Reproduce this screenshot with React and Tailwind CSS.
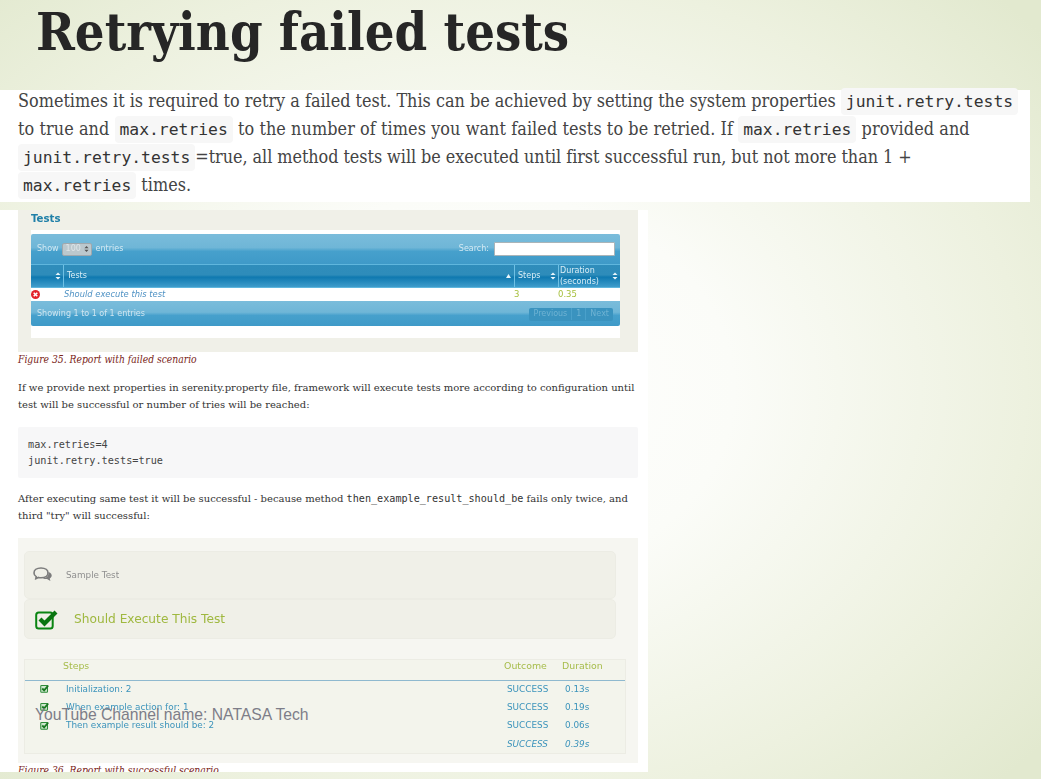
import React from "react";

const serif = "font-['DejaVu_Serif_Condensed','DejaVu_Serif',serif]";
const serifWide = "font-['DejaVu_Serif',serif]";
const sans = "font-['DejaVu_Sans','Liberation_Sans',sans-serif]";
const mono = "font-['DejaVu_Sans_Mono',monospace]";

function Code({ children }) {
  return (
    <code className={`${mono} text-[16.35px] tracking-normal leading-none bg-[#f7f7f7] rounded-[4px] px-[5px] py-[4px] text-[#333]`}>
      {children}
    </code>
  );
}

function SortIcon() {
  return (
    <svg width="6" height="8" viewBox="0 0 6 8" className="shrink-0">
      <path d="M3 0.5 L5.5 3 H0.5Z M3 7.5 L5.5 5 H0.5Z" fill="#eaf6fb" />
    </svg>
  );
}

function SortIconDark() {
  return (
    <svg width="5" height="8" viewBox="0 0 6 8" className="shrink-0">
      <path d="M3 0.5 L5.5 3 H0.5Z M3 7.5 L5.5 5 H0.5Z" fill="#555" />
    </svg>
  );
}

function Check() {
  return (
    <svg width="9" height="9" viewBox="0 0 12 12" className="shrink-0 -mt-[2px]">
      <rect x="1" y="2" width="9" height="9" rx="1" fill="#cfe8cf" stroke="#2e8b3a" strokeWidth="1.4" />
      <path d="M3 6 L5.5 8.5 L11 2" fill="none" stroke="#17761f" strokeWidth="2.4" />
    </svg>
  );
}

function StepRow({ name, time, h, italic }) {
  return (
    <div className={`flex items-center text-[#3b93bb] text-[8.85px] ${h} ${sans} ${italic ? "italic" : ""}`}>
      <div className="w-[13px] ml-[15px] flex">{name && <Check />}</div>
      <div className="ml-[13px] flex-1">{name}</div>
      <div className="w-[58px]">SUCCESS</div>
      <div className="w-[60px]">{time}</div>
    </div>
  );
}

const barGrad = "bg-[linear-gradient(180deg,#7abcdb_0%,#6fb6d7_45%,#46a0cc_58%,#3f9ac8_100%)]";

export default function App() {
  return (
    <div className="relative h-[779px] w-[1041px] overflow-hidden bg-[radial-gradient(ellipse_70%_72%_at_46%_50%,#ffffff_0%,#fbfcf8_35%,#edf1df_75%,#e2e9cf_100%)]">
      <div className="h-[90px] pl-[36px] pt-[1px]">
        <h1 className={`${serif} font-bold text-[52px] leading-[62px] text-[#262626]`}>Retrying failed tests</h1>
      </div>

      <div className={`${serif} w-[1030px] h-[112px] bg-white pl-[18px] text-[17.85px] text-[#444]`}>
        <p className="whitespace-nowrap h-[28px] leading-[22px]">Sometimes it is required to retry a failed test. This can be achieved by setting the system properties <Code>junit.retry.tests</Code></p>
        <p className="whitespace-nowrap h-[28px] leading-[22px] tracking-[0.08px]">to true and <Code>max.retries</Code> to the number of times you want failed tests to be retried. If <Code>max.retries</Code> provided and</p>
        <p className="whitespace-nowrap h-[28px] leading-[22px] tracking-[-0.05px]"><Code>junit.retry.tests</Code>=true, all method tests will be executed until first successful run, but not more than 1 +</p>
        <p className="whitespace-nowrap h-[28px] leading-[22px]"><Code>max.retries</Code> times.</p>
      </div>

      <div className="mt-[8px] w-[648px] h-[562px] bg-white pl-[18px] pr-[10px]">
        {/* Figure 35 */}
        <div className="h-[142px] bg-[#f0f0e8] pl-[13px] pr-[18px]">
          <div className="blur-[0.3px]">
            <div className={`${sans} h-[20px] pt-[2px] text-[10.2px] leading-[13px] font-bold text-[#1f7fa8]`}>Tests</div>
            <div className="h-[108px] bg-white pt-[4px]">
              <div className={`${barGrad} rounded-t-[2px] h-[30px] flex items-center pl-[6px] pr-[5px] text-[8px] ${sans} text-[#d3e9f3]`}>
                <span>Show</span>
                <span className="ml-[3px] w-[30px] h-[13px] rounded-[2px] bg-[#bcc8cd] border border-[#a0a8ad] text-[#dfe5e8] flex items-center pl-[3px] justify-between pr-[2px]">
                  100
                  <SortIconDark />
                </span>
                <span className="ml-[4px]">entries</span>
                <span className="ml-auto mr-[5px]">Search:</span>
                <span className="w-[121px] h-[14px] bg-white border border-[#aab4b8] rounded-[1px]" />
              </div>
              <div className={`h-[24px] flex text-[8px] leading-[11.5px] ${sans} text-[#d8edf6] bg-[linear-gradient(180deg,#2f8dbb_0%,#2e8cba_45%,#0f79b0_55%,#3f9ccb_100%)] border-y border-[#5fb6dd]`}>
                <div className="w-[33px] border-r border-[#6fc0e4] flex items-center justify-end pr-[2px]"><SortIcon /></div>
                <div className="flex-1 flex items-center pl-[3px]">
                  <span>Tests</span>
                  <svg width="5" height="4" viewBox="0 0 5 4" className="ml-auto mr-[3px]"><path d="M2.5 0 L5 4 H0Z" fill="#eaf6fb" /></svg>
                </div>
                <div className="w-[45px] border-x border-[#6fc0e4] flex items-center pl-[3px] pr-[2px] justify-between"><span>Steps</span><SortIcon /></div>
                <div className="w-[62px] -ml-[1px] flex items-center pl-[2px] pr-[2px] justify-between"><span>Duration<br />(seconds)</span><SortIcon /></div>
              </div>
              <div className={`h-[13px] flex items-center text-[8.5px] ${sans} bg-white`}>
                <div className="w-[33px] flex">
                  <svg width="9" height="9" viewBox="0 0 10 10"><circle cx="5" cy="5" r="5" fill="#e2232a" /><path d="M3 3 L7 7 M7 3 L3 7" stroke="#fff" strokeWidth="1.7" /></svg>
                </div>
                <div className="flex-1 italic text-[#4f92c4] text-[8.35px]">Should execute this test</div>
                <div className="w-[44px] text-[#a6bf3c]">3</div>
                <div className="w-[62px] text-[#a6bf3c]">0.35</div>
              </div>
              <div className={`${barGrad} rounded-b-[2px] h-[25px] flex items-center pl-[6px] pr-[7px] pt-[1px] text-[8px] ${sans} text-[#cfe6f1]`}>
                <span>Showing 1 to 1 of 1 entries</span>
                <span className="ml-auto flex bg-[#3a93bf] rounded-[2px] text-[#6fb3d3] h-[13px] items-center">
                  <span className="px-[4px] border-r border-[#4aa0ca]">Previous</span>
                  <span className="px-[4px] border-r border-[#4aa0ca]">1</span>
                  <span className="px-[4px]">Next</span>
                </span>
              </div>
            </div>
          </div>
        </div>

        <p className={`${serif} italic text-[10.25px] leading-[14px] text-[#7a2518]`}>Figure 35. Report with failed scenario</p>

        <div className={`${serifWide} text-[10px] leading-[17px] text-[#333] mt-[13px]`}>
          <p className="whitespace-nowrap h-[17px]">If we provide next properties in serenity.property file, framework will execute tests more according to configuration until</p>
          <p className="whitespace-nowrap h-[17px]">test will be successful or number of tries will be reached:</p>
        </div>

        <pre className={`${mono} mt-[14px] h-[51px] bg-[#f7f7f8] rounded-[2px] pl-[10px] pt-[10px] text-[10.2px] leading-[16px] text-[#444]`}>{"max.retries=4\njunit.retry.tests=true"}</pre>

        <div className={`${serifWide} text-[10px] leading-[17px] text-[#333] mt-[12px]`}>
          <p className="whitespace-nowrap h-[17px]">After executing same test it will be successful - because method <code className={`${mono} text-[10.15px] leading-none text-[#333]`}>then_example_result_should_be</code> fails only twice, and</p>
          <p className="whitespace-nowrap h-[17px]">third "try" will successful:</p>
        </div>

        {/* Figure 36 */}
        <div className="mt-[14px] h-[225px] bg-[#f6f6f1] pt-[13px] pl-[6px] pr-[12px]">
          <div className="blur-[0.3px]">
            <div className={`h-[48px] mr-[10px] pt-[1px] rounded-[5px] border border-[#ecece4] bg-[#f0f0e8] flex items-center ${sans}`}>
              <svg width="20" height="15" viewBox="0 0 20 15" className="ml-[8px] -mt-[3px]">
                <path d="M8 1 C3.5 1 1 3.3 1 6 C1 7.5 1.8 8.8 3.2 9.6 L2.8 11.6 L5.5 10.4 C6.3 10.7 7.2 10.8 8 10.8 C12.5 10.8 15 8.6 15 6 C15 3.3 12.5 1 8 1Z" fill="none" stroke="#7c7c7c" strokeWidth="1.6" />
                <path d="M15.5 5 C18 6 19 7.5 18.7 9 C18.4 10.2 17.5 11 16.8 11.4 L17.4 14 L14 12 C12.5 12.2 11 12 9.8 11.4 C12.5 11.4 16 9.5 15.5 5Z" fill="#7c7c7c" />
              </svg>
              <span className="ml-[13px] text-[8.8px] text-[#8f8f8f]">Sample Test</span>
            </div>
            <div className={`h-[40px] mr-[10px] rounded-[5px] border border-[#ecece4] bg-[#f0f0e8] flex items-center ${sans}`}>
              <svg width="24" height="21" viewBox="0 0 24 21" className="ml-[10px]">
                <rect x="1.2" y="3.5" width="16.5" height="16" rx="2.5" fill="none" stroke="#0a8512" strokeWidth="2" />
                <path d="M5 10 L9.5 14.5 L21 3" fill="none" stroke="#0a7510" strokeWidth="4.2" />
              </svg>
              <span className="ml-[15px] text-[12.2px] text-[#9fb83f]">Should Execute This Test</span>
            </div>

            <div className={`mt-[20px] h-[95px] border border-[#ecece4] bg-[#f3f4ec] ${sans}`}>
              <div className="h-[21px] pb-[7px] flex items-center text-[#a6bc4a] text-[9.4px] border-b border-[#8fb9cf]">
                <div className="ml-[38px] flex-1">Steps</div>
                <div className="w-[58px]">Outcome</div>
                <div className="w-[63px]">Duration</div>
              </div>
              <StepRow name="Initialization: 2" time="0.13s" h="h-[17px]" />
              <StepRow name="When example action for: 1" time="0.19s" h="h-[19px]" />
              <StepRow name="Then example result should be: 2" time="0.06s" h="h-[18px]" />
              <StepRow name="" time="0.39s" h="h-[19px]" italic />
            </div>
          </div>
        </div>
        <div className="h-[9px] overflow-hidden">
          <p className={`${serif} italic text-[10.25px] leading-[14px] text-[#7a2518]`}>Figure 36. Report with successful scenario</p>
        </div>
      </div>

      <div className="absolute left-[35px] top-[705px] text-[15.7px] leading-[20px] font-['Liberation_Sans',sans-serif] text-[#7d7d88] whitespace-nowrap">YouTube Channel name: NATASA Tech</div>
    </div>
  );
}
